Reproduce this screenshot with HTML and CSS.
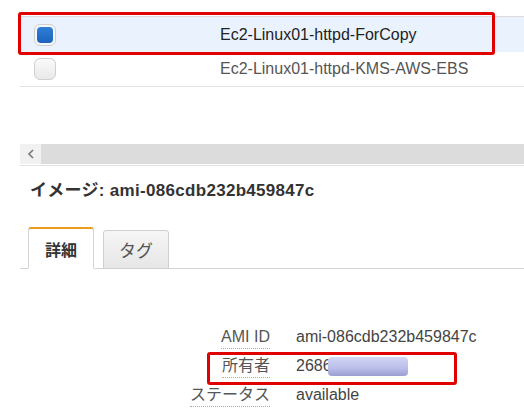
FILE: index.html
```html
<!DOCTYPE html>
<html lang="ja">
<head>
    <meta charset="UTF-8">
    <title>AMI</title>
    <link rel="stylesheet" href="styles.css">
</head>
<body>
    <div class="page">
        <div class="grid">
            <div class="row selected">
                <div class="cell-check"><span class="check checked"></span></div>
                <div class="cell-name">Ec2-Linux01-httpd-ForCopy</div>
            </div>
            <div class="row">
                <div class="cell-check"><span class="check"></span></div>
                <div class="cell-name">Ec2-Linux01-httpd-KMS-AWS-EBS</div>
            </div>
            <div class="mark mark-row"></div>
        </div>

        <div class="hscroll">
            <div class="hscroll-btn">
                <svg width="8" height="10" viewBox="0 0 8 10"><path d="M6 1 L2 5 L6 9" fill="none" stroke="#777" stroke-width="1.6"/></svg>
            </div>
            <div class="hscroll-track"></div>
        </div>

        <h2 class="title">イメージ: ami-086cdb232b459847c</h2>

        <div class="tabs">
            <div class="tab active">詳細</div>
            <div class="tab">タグ</div>
        </div>

        <div class="details">
            <div class="drow">
                <div class="dlabel"><span>AMI ID</span></div>
                <div class="dvalue">ami-086cdb232b459847c</div>
            </div>
            <div class="drow">
                <div class="dlabel"><span>所有者</span></div>
                <div class="dvalue owner">2686<span class="blur"></span></div>
            </div>
            <div class="drow">
                <div class="dlabel"><span>ステータス</span></div>
                <div class="dvalue">available</div>
            </div>
            <div class="mark mark-owner"></div>
        </div>
    </div>
</body>
</html>
```

FILE: styles.css
```css
* {
    box-sizing: border-box;
    margin: 0;
    padding: 0;
}

body {
    font-family: "Liberation Sans", Arial, "Noto Sans CJK JP", sans-serif;
    color: #444;
    background: #fff;
    font-size: 16px;
}

.page {
    padding-top: 16px;
    padding-left: 20px;
}

/* table */
.grid {
    position: relative;
    border-top: 1px solid #dcdcdc;
}

.row {
    display: flex;
    align-items: center;
    height: 35px;
    border-bottom: 1px solid #e3e3e3;
}

.row.selected {
    background: #eaf3fd;
    border-bottom: none;
}

.cell-check {
    width: 200px;
    padding-left: 14px;
    display: flex;
}

.cell-name {
    color: #555;
}

.selected .cell-name {
    color: #222;
}

.check {
    width: 22px;
    height: 22px;
    border: 1px solid #cfcfcf;
    border-radius: 6px;
    background: linear-gradient(#fafafa, #e8e8e8);
    position: relative;
}

.check.checked {
    background: #f4f7fb;
}

.check.checked::after {
    content: "";
    position: absolute;
    left: 2px;
    top: 2px;
    width: 16px;
    height: 16px;
    border-radius: 4px;
    background: linear-gradient(#2f7fd6, #1d63bc);
}

/* red annotation boxes */
.mark {
    position: absolute;
    border: 3px solid #e00000;
    border-radius: 3px;
}

.mark-row {
    left: -2px;
    top: -5px;
    width: 477px;
    height: 43px;
}

/* horizontal scrollbar */
.hscroll {
    display: flex;
    height: 22px;
    margin-top: 57px;
    border-bottom: 1px solid #e3e3e3;
    padding-bottom: 1px;
}

.hscroll-btn {
    width: 21px;
    background: #f1f1f1;
    display: flex;
    align-items: center;
    justify-content: center;
}

.hscroll-track {
    flex: 1;
    background: #dcdcdc;
}

.title {
    font-size: 17px;
    font-weight: bold;
    color: #333;
    margin-top: 15px;
    margin-left: 10px;
    line-height: 20px;
    letter-spacing: 0.3px;
}

/* tabs */
.tabs {
    display: flex;
    align-items: flex-end;
    gap: 9px;
    margin-top: 26px;
    padding-left: 8px;
    border-bottom: 1px solid #d5d5d5;
}

.tab {
    width: 66px;
    height: 39px;
    margin-bottom: -1px;
    display: flex;
    align-items: center;
    justify-content: center;
    font-size: 17px;
    color: #555;
    border: 1px solid #cfcfcf;
    border-radius: 3px 3px 0 0;
    background: linear-gradient(#f6f6f6, #e6e6e6);
}

.tab.active {
    height: 42px;
    font-size: 16px;
    font-weight: bold;
    color: #333;
    background: #fff;
    border-color: #d5d5d5;
    border-top: 2px solid #ec9c1c;
    border-bottom-color: #fff;
}

/* details */
.details {
    position: relative;
    margin-top: 58px;
}

.drow {
    display: flex;
    line-height: 20px;
    margin-bottom: 7px;
}

.dlabel {
    width: 250px;
    text-align: right;
    color: #555;
}

.dlabel span {
    display: inline-block;
    padding-bottom: 1px;
    border-bottom: 1px dotted #aaa;
}

.dvalue {
    margin-left: 26px;
    color: #444;
}

.owner {
    position: relative;
}

.blur {
    position: absolute;
    left: 32px;
    top: 1px;
    width: 80px;
    height: 19px;
    border-radius: 4px;
    background: linear-gradient(#d3d6f5, #b9bde9 60%, #9a9ed0);
}

.mark-owner {
    left: 187px;
    top: 25px;
    width: 250px;
    height: 33px;
}
```
